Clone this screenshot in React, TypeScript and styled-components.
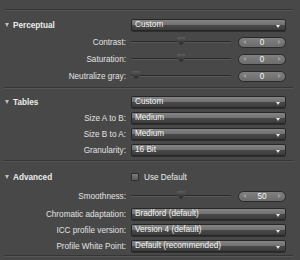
import React from 'react';
import styled, { createGlobalStyle } from 'styled-components';

const GlobalStyle = createGlobalStyle`
  html, body {
    margin: 0;
    padding: 0;
    background: #484848;
  }
  body {
    font-family: "Liberation Sans", Arial, sans-serif;
    -webkit-font-smoothing: antialiased;
  }
`;

const Panel = styled.div`
  width: 300px;
  height: 260px;
  overflow: hidden;
  background: #484848;
  padding-top: 9px;
  box-sizing: border-box;
  color: #dcdcdc;
  font-size: 8.2px;
`;

const Separator = styled.div`
  margin: 0 7px 0 4px;
  height: 1px;
  background: #353535;
  border-bottom: 1px solid #555;
`;

const Section = styled.div<{ $top: number; $bottom: number }>`
  display: flex;
  flex-direction: column;
  padding: ${(p) => p.$top}px 0 ${(p) => p.$bottom}px;
`;

const Row = styled.div<{ $gap?: number }>`
  display: grid;
  grid-template-columns: 126px 1fr;
  align-items: center;
  column-gap: 5px;
  height: 12px;
  margin-top: ${(p) => p.$gap ?? 0}px;
  padding-right: 14px;
`;

const Header = styled.div`
  display: flex;
  align-items: center;
  gap: 4px;
  padding-left: 5px;
  font-weight: bold;
  color: #ececec;
  white-space: nowrap;
`;

const Disclosure = styled.span`
  width: 0;
  height: 0;
  border-left: 2.5px solid transparent;
  border-right: 2.5px solid transparent;
  border-top: 4px solid #bdbdbd;
`;

const Label = styled.div`
  text-align: right;
  white-space: nowrap;
  color: #e2e2e2;
`;

const Select = styled.div`
  position: relative;
  height: 10px;
  line-height: 10px;
  border: 1px solid #262626;
  border-radius: 2px;
  background: linear-gradient(#858585 0%, #727272 45%, #4a4a4a 50%, #3c3c3c 100%);
  box-shadow: 0 1px 0 rgba(0, 0, 0, 0.35);
  color: #f4f4f4;
  padding-left: 3px;
  white-space: nowrap;
  overflow: hidden;

  &::after {
    content: '';
    position: absolute;
    right: 5px;
    top: 5px;
    border-left: 2.5px solid transparent;
    border-right: 2.5px solid transparent;
    border-top: 3px solid #e8e8e8;
  }
`;

const SliderLine = styled.div`
  display: flex;
  align-items: center;
  gap: 7px;
`;

const Track = styled.div`
  position: relative;
  flex: 1;
  height: 1px;
  background: #2a2a2a;
  border-bottom: 1px solid #585858;
`;

const Thumb = styled.div`
  position: absolute;
  top: -4px;
  width: 8px;
  height: 8px;
  margin-left: -4px;
  background: linear-gradient(#5e5e5e, #242424);
  clip-path: polygon(0 0, 100% 0, 100% 55%, 50% 100%, 0 55%);
`;

const Stepper = styled.div`
  position: relative;
  width: 46px;
  height: 9px;
  line-height: 9px;
  border: 1px solid #2a2a2a;
  border-radius: 6px;
  background: linear-gradient(#808080, #6c6c6c);
  text-align: center;
  color: #f6f6f6;
  flex: none;

  &::before,
  &::after {
    content: '';
    position: absolute;
    top: 2.5px;
    border-top: 2px solid transparent;
    border-bottom: 2px solid transparent;
  }
  &::before {
    left: 4px;
    border-right: 3px solid #9c9c9c;
  }
  &::after {
    right: 4px;
    border-left: 3px solid #9c9c9c;
  }
`;

const Check = styled.div`
  display: flex;
  align-items: center;
  gap: 5px;
  color: #ececec;
  white-space: nowrap;
`;

const Box = styled.span`
  width: 6px;
  height: 6px;
  border: 1px solid #2c2c2c;
  border-radius: 1px;
  background: linear-gradient(#7a7a7a, #5c5c5c);
`;

type SliderProps = { value: number; pos: number };

const Slider = ({ value, pos }: SliderProps) => (
  <SliderLine>
    <Track>
      <Thumb style={{ left: `${pos}%` }} />
    </Track>
    <Stepper>{value}</Stepper>
  </SliderLine>
);

type FieldProps = { label: string; gap?: number; children: React.ReactNode };

const Field = ({ label, gap, children }: FieldProps) => (
  <Row $gap={gap}>
    <Label>{label}</Label>
    {children}
  </Row>
);

const App = () => (
  <>
    <GlobalStyle />
    <Panel>
      <Separator />
      <Section $top={8} $bottom={5}>
        <Row>
          <Header>
            <Disclosure />
            Perceptual
          </Header>
          <Select>Custom</Select>
        </Row>
        <Field label="Contrast:" gap={5}>
          <Slider value={0} pos={50} />
        </Field>
        <Field label="Saturation:" gap={5}>
          <Slider value={0} pos={50} />
        </Field>
        <Field label="Neutralize gray:" gap={5}>
          <Slider value={0} pos={5} />
        </Field>
      </Section>
      <Separator />
      <Section $top={7} $bottom={4}>
        <Row>
          <Header>
            <Disclosure />
            Tables
          </Header>
          <Select>Custom</Select>
        </Row>
        <Field label="Size A to B:" gap={4}>
          <Select>Medium</Select>
        </Field>
        <Field label="Size B to A:" gap={4}>
          <Select>Medium</Select>
        </Field>
        <Field label="Granularity:" gap={4}>
          <Select>16 Bit</Select>
        </Field>
      </Section>
      <Separator />
      <Section $top={9} $bottom={3}>
        <Row>
          <Header>
            <Disclosure />
            Advanced
          </Header>
          <Check>
            <Box />
            Use Default
          </Check>
        </Row>
        <Field label="Smoothness:" gap={7}>
          <Slider value={50} pos={50} />
        </Field>
        <Field label="Chromatic adaptation:" gap={6}>
          <Select>Bradford (default)</Select>
        </Field>
        <Field label="ICC profile version:" gap={4}>
          <Select>Version 4 (default)</Select>
        </Field>
        <Field label="Profile White Point:" gap={4}>
          <Select>Default (recommended)</Select>
        </Field>
      </Section>
      <Separator />
    </Panel>
  </>
);

export default App;
